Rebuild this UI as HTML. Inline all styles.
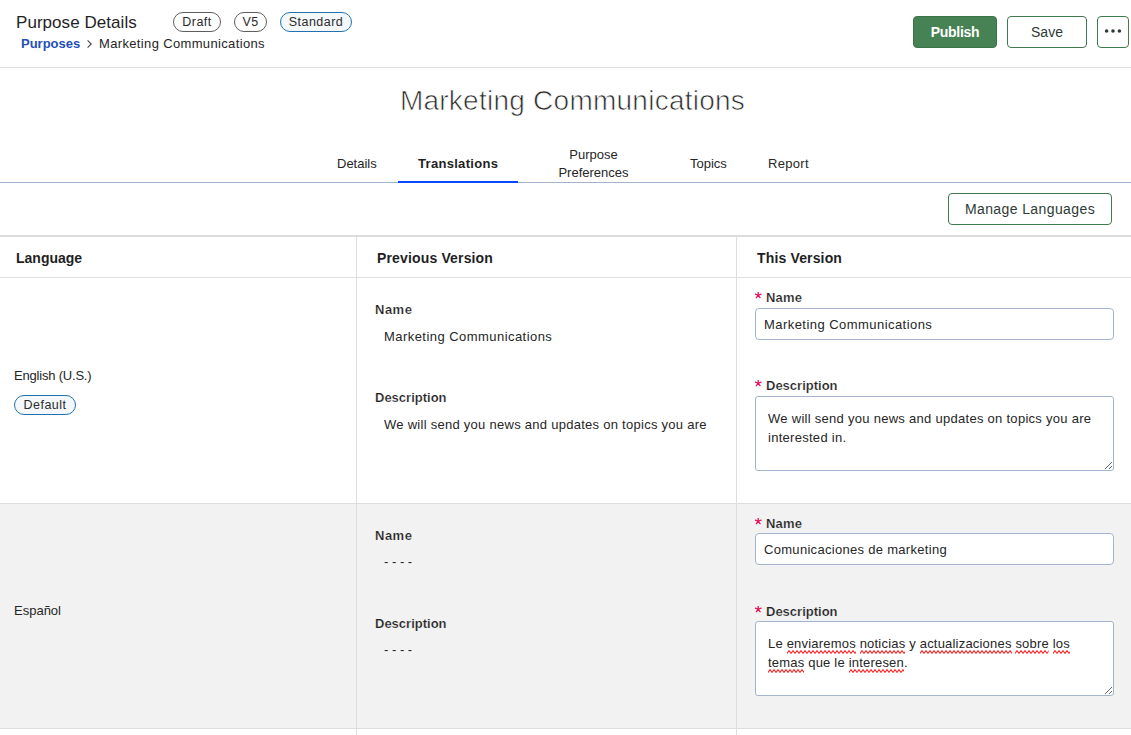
<!DOCTYPE html>
<html><head><meta charset="utf-8">
<style>
*{box-sizing:border-box;margin:0;padding:0}
html,body{width:1131px;height:735px;overflow:hidden;background:#fff}
body{font-family:"Liberation Sans",sans-serif;color:#262626;position:relative}
.a{position:absolute;white-space:nowrap;line-height:1}
.badge{position:absolute;height:20px;border:1px solid #5e5e5e;border-radius:10px;font-size:12.5px;line-height:18px;text-align:center;color:#2b2b2b;background:#fff;letter-spacing:0.45px}
.badge.blue{border-color:#2272b0;background:#f4f8fb}
.btn{position:absolute;height:32px;border:1px solid #3f7a50;border-radius:4px;background:#fff;font-size:14px;line-height:30px;text-align:center;color:#2e3a36}
.hline{position:absolute;left:0;width:1131px;height:1px;background:#dedede}
.vline{position:absolute;width:1px;background:#dedede}
.lbl{font-size:13px;font-weight:700;color:#1f1f1f}
.sb{-webkit-text-stroke:0.2px #fff}
.val{font-size:13px;color:#262626}
.req{position:absolute;width:7px;height:7px;line-height:0}
.inp{position:absolute;left:755px;width:359px;height:32px;border:1px solid #a3b5cc;border-radius:4px;background:#fff}
textarea{position:absolute;left:755px;width:359px;height:75px;border:1px solid #a3b5cc;border-radius:3px;background:#fff;resize:both;outline:none}
.ta-text{position:absolute;left:768px;width:340px;font-size:13px;line-height:19px;white-space:normal;color:#262626}
.sp{position:relative}
.wv{position:absolute;left:0;bottom:-3px;width:100%;height:5px;display:block}
</style></head>
<body>
<svg width="0" height="0" style="position:absolute"><defs><pattern id="wave" width="4" height="5" patternUnits="userSpaceOnUse"><path d="M-1 3 L0 4.3 L2 1.6 L4 4.3 L5 3" fill="none" stroke="#ff2020" stroke-width="1.1"/></pattern></defs></svg>
<!-- header -->
<div class="a" style="left:16px;top:14px;font-size:17px;color:#1f1f1f;letter-spacing:0.05px">Purpose Details</div>
<div class="badge" style="left:173px;top:12px;width:48px">Draft</div>
<div class="badge" style="left:234px;top:12px;width:33px">V5</div>
<div class="badge blue" style="left:280px;top:12px;width:72px">Standard</div>
<div class="a" style="left:21px;top:37px;font-size:13px;font-weight:700;color:#2350b8">Purposes</div>
<svg class="a" style="left:85px;top:38px" width="10" height="12"><polyline points="2.6,2.4 6.2,6 2.6,9.6" fill="none" stroke="#444" stroke-width="1.1"/></svg>
<div class="a" style="left:99px;top:37px;font-size:13px;letter-spacing:0.35px">Marketing Communications</div>

<div class="btn" style="left:913px;top:16px;width:84px;background:#478254;border-color:#3c7449;color:#fff;font-weight:700;letter-spacing:-0.3px">Publish</div>
<div class="btn" style="left:1007px;top:16px;width:80px">Save</div>
<div class="btn" style="left:1097px;top:16px;width:32px">
  <svg width="30" height="30" style="position:absolute;left:0;top:0"><circle cx="8.6" cy="14" r="1.8" fill="#2e3a36"/><circle cx="15" cy="14" r="1.8" fill="#2e3a36"/><circle cx="21.4" cy="14" r="1.8" fill="#2e3a36"/></svg>
</div>
<div class="hline" style="top:67px;background:#e0e0e0"></div>

<!-- title -->
<div class="a" style="left:0;width:1131px;text-align:center;top:87px;font-size:28px;font-weight:300;color:#2a2a2a;padding-left:14px;letter-spacing:0.25px;-webkit-text-stroke:0.7px #fff">Marketing Communications</div>

<!-- tabs -->
<div class="a" style="left:337px;top:157px;font-size:13px">Details</div>
<div class="a" style="left:418px;top:157px;font-size:13px;font-weight:700;color:#1f1f1f;letter-spacing:0.3px">Translations</div>
<div class="a" style="left:558px;top:146px;font-size:13px;line-height:18px;text-align:center;width:71px">Purpose<br>Preferences</div>
<div class="a" style="left:690px;top:157px;font-size:13px">Topics</div>
<div class="a" style="left:768px;top:157px;font-size:13px;letter-spacing:0.3px">Report</div>
<div class="hline" style="top:182px;background:#a2b4cb"></div>
<div class="a" style="left:398px;top:181px;width:120px;height:2px;background:#0549ff"></div>

<div class="btn" style="left:948px;top:193px;width:164px;letter-spacing:0.4px">Manage Languages</div>

<!-- table -->
<div class="hline" style="top:235px;height:2px;background:#dcdcdc"></div>
<div class="a lbl" style="left:16px;top:251px;font-size:14px;color:#1f1f1f">Language</div>
<div class="a lbl" style="left:377px;top:251px;font-size:14px;color:#1f1f1f;letter-spacing:0.15px">Previous Version</div>
<div class="a lbl" style="left:757px;top:251px;font-size:14px;color:#1f1f1f;letter-spacing:0.15px">This Version</div>
<div class="hline" style="top:277px"></div>

<!-- row 2 bg -->
<div class="a" style="left:0;top:504px;width:1131px;height:224px;background:#f2f2f2"></div>
<div class="hline" style="top:503px"></div>
<div class="hline" style="top:728px"></div>
<div class="vline" style="left:356px;top:237px;height:498px"></div>
<div class="vline" style="left:736px;top:237px;height:498px"></div>

<!-- row 1 -->
<div class="a val" style="left:14px;top:369px;letter-spacing:-0.2px">English (U.S.)</div>
<div class="badge blue" style="left:14px;top:395px;width:62px">Default</div>

<div class="a lbl sb" style="left:375px;top:303px;letter-spacing:0.5px">Name</div>
<div class="a val" style="left:384px;top:330px;letter-spacing:0.45px">Marketing Communications</div>
<div class="a lbl sb" style="left:375px;top:391px">Description</div>
<div class="a val" style="left:384px;top:418px;letter-spacing:0.27px">We will send you news and updates on topics you are</div>

<div class="req" style="left:755px;top:292px"><svg width="7" height="7"><path d="M3.20 3.20L3.20 0.10M3.20 3.20L6.15 2.24M3.20 3.20L5.02 5.71M3.20 3.20L1.38 5.71M3.20 3.20L0.25 2.24" stroke="#e8175d" stroke-width="1.3" stroke-linecap="round" fill="none"/></svg></div><div class="a lbl sb" style="left:766px;top:291px;letter-spacing:0.15px">Name</div>
<div class="inp" style="top:308px"></div>
<div class="a val" style="left:764px;top:318px;letter-spacing:0.45px">Marketing Communications</div>
<div class="req" style="left:755px;top:380px"><svg width="7" height="7"><path d="M3.20 3.20L3.20 0.10M3.20 3.20L6.15 2.24M3.20 3.20L5.02 5.71M3.20 3.20L1.38 5.71M3.20 3.20L0.25 2.24" stroke="#e8175d" stroke-width="1.3" stroke-linecap="round" fill="none"/></svg></div><div class="a lbl sb" style="left:766px;top:379px">Description</div>
<textarea style="top:396px"></textarea>
<div class="ta-text" style="top:409px;letter-spacing:0.28px">We will send you news and updates on topics you are interested in.</div>

<!-- row 2 -->
<div class="a val" style="left:14px;top:604px">Español</div>
<div class="a lbl sb" style="-webkit-text-stroke-color:#f2f2f2;left:375px;top:529px;letter-spacing:0.5px">Name</div>
<div class="a val" style="left:384px;top:555px">- - - -</div>
<div class="a lbl sb" style="-webkit-text-stroke-color:#f2f2f2;left:375px;top:617px">Description</div>
<div class="a val" style="left:384px;top:643px">- - - -</div>

<div class="req" style="left:755px;top:518px"><svg width="7" height="7"><path d="M3.20 3.20L3.20 0.10M3.20 3.20L6.15 2.24M3.20 3.20L5.02 5.71M3.20 3.20L1.38 5.71M3.20 3.20L0.25 2.24" stroke="#e8175d" stroke-width="1.3" stroke-linecap="round" fill="none"/></svg></div><div class="a lbl sb" style="-webkit-text-stroke-color:#f2f2f2;left:766px;top:517px;letter-spacing:0.15px">Name</div>
<div class="inp" style="top:533px"></div>
<div class="a val" style="left:764px;top:543px;letter-spacing:0.3px">Comunicaciones de marketing</div>
<div class="req" style="left:755px;top:606px"><svg width="7" height="7"><path d="M3.20 3.20L3.20 0.10M3.20 3.20L6.15 2.24M3.20 3.20L5.02 5.71M3.20 3.20L1.38 5.71M3.20 3.20L0.25 2.24" stroke="#e8175d" stroke-width="1.3" stroke-linecap="round" fill="none"/></svg></div><div class="a lbl sb" style="-webkit-text-stroke-color:#f2f2f2;left:766px;top:605px">Description</div>
<textarea style="top:621px"></textarea>
<div class="ta-text" style="top:634px;letter-spacing:0.2px">Le <span class="sp">enviaremos<svg class="wv"><rect width="100%" height="5" fill="url(#wave)"/></svg></span> <span class="sp">noticias<svg class="wv"><rect width="100%" height="5" fill="url(#wave)"/></svg></span> y <span class="sp">actualizaciones<svg class="wv"><rect width="100%" height="5" fill="url(#wave)"/></svg></span> <span class="sp">sobre<svg class="wv"><rect width="100%" height="5" fill="url(#wave)"/></svg></span> <span class="sp">los<svg class="wv"><rect width="100%" height="5" fill="url(#wave)"/></svg></span> <span class="sp">temas<svg class="wv"><rect width="100%" height="5" fill="url(#wave)"/></svg></span> que le <span class="sp">interesen<svg class="wv"><rect width="100%" height="5" fill="url(#wave)"/></svg></span>.</div>
</body></html>
